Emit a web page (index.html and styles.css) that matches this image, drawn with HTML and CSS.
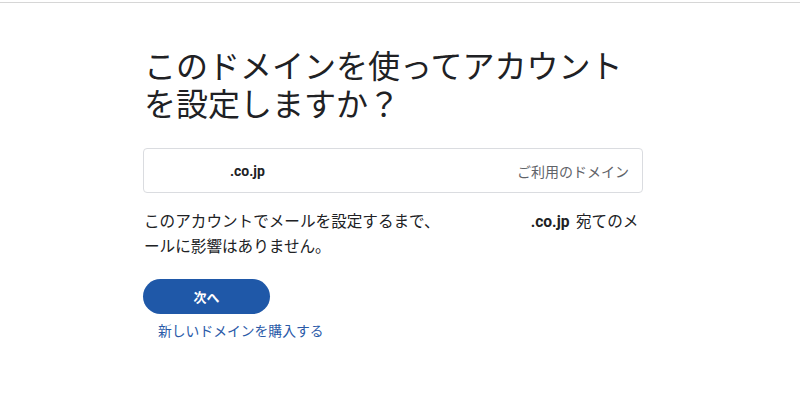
FILE: index.html
```html
<!DOCTYPE html>
<html lang="ja">
<head>
<meta charset="utf-8">
<link rel="stylesheet" href="styles.css">
</head>
<body>
<div class="topbar"></div>
<main class="content">
  <h1 class="title">このドメインを使ってアカウントを設定しますか？</h1>
  <div class="domain-box">
    <span class="domain"><span class="blank blank-box"></span>.co.jp</span>
    <span class="domain-label">ご利用のドメイン</span>
  </div>
  <p class="note">このアカウントでメールを設定するまで、<span class="blank blank-note"></span><b class="bold">.co.jp</b> 宛てのメールに影響はありません。</p>
  <div class="actions">
    <button class="next">次へ</button>
    <a class="buy" href="#">新しいドメインを購入する</a>
  </div>
</main>
</body>
</html>
```
FILE: styles.css
```css
html, body {
  margin: 0;
  padding: 0;
  background: #fff;
}
body {
  font-family: Roboto, "Noto Sans CJK JP", sans-serif;
  color: #202124;
}
.topbar {
  margin-top: 2px;
  height: 0;
  border-top: 1px solid #d6d6d6;
}
.content {
  margin-left: 143px;
  width: 500px;
  padding-top: 42px;
}
.title {
  margin: 0 0 0 1px;
  font-family: "Noto Sans CJK JP", sans-serif;
  font-weight: 400;
  font-size: 32px;
  line-height: 38px;
  color: #202124;
}
.domain-box {
  margin-top: 27px;
  width: 500px;
  height: 45px;
  border: 1px solid #dadce0;
  border-radius: 4px;
  display: flex;
  align-items: center;
  justify-content: space-between;
  padding: 0 13px 0 15px;
  box-sizing: border-box;
}
.domain {
  font-family: Roboto, Arial, sans-serif;
  font-weight: 700;
  font-size: 14px;
  color: #202124;
  display: flex;
  align-items: center;
}
.blank {
  display: inline-block;
}
.blank-box {
  width: 71px;
}
.domain-label {
  font-family: "Noto Sans CJK JP", sans-serif;
  font-size: 14px;
  color: #5f6368;
}
.note {
  margin: 16px 0 0 1px;
  font-family: "Noto Sans CJK JP", sans-serif;
  font-size: 15.6px;
  line-height: 23px;
  color: #202124;
}
.blank-note {
  width: 91px;
}
.bold {
  font-family: Roboto, Arial, sans-serif;
  font-weight: 700;
  margin-right: 3px;
}
.actions {
  margin-top: 22px;
  display: flex;
  flex-direction: column;
  align-items: flex-start;
}
.next {
  width: 127px;
  height: 35px;
  border: none;
  border-radius: 18px;
  background: #1f58a8;
  color: #fff;
  font-family: "Noto Sans CJK JP", sans-serif;
  font-weight: 700;
  font-size: 13px;
  padding: 0;
  cursor: pointer;
}
.buy {
  margin: 6px 0 0 15px;
  font-family: "Noto Sans CJK JP", sans-serif;
  font-size: 13.8px;
  line-height: 20px;
  color: #2a5aa8;
  text-decoration: none;
}
```
